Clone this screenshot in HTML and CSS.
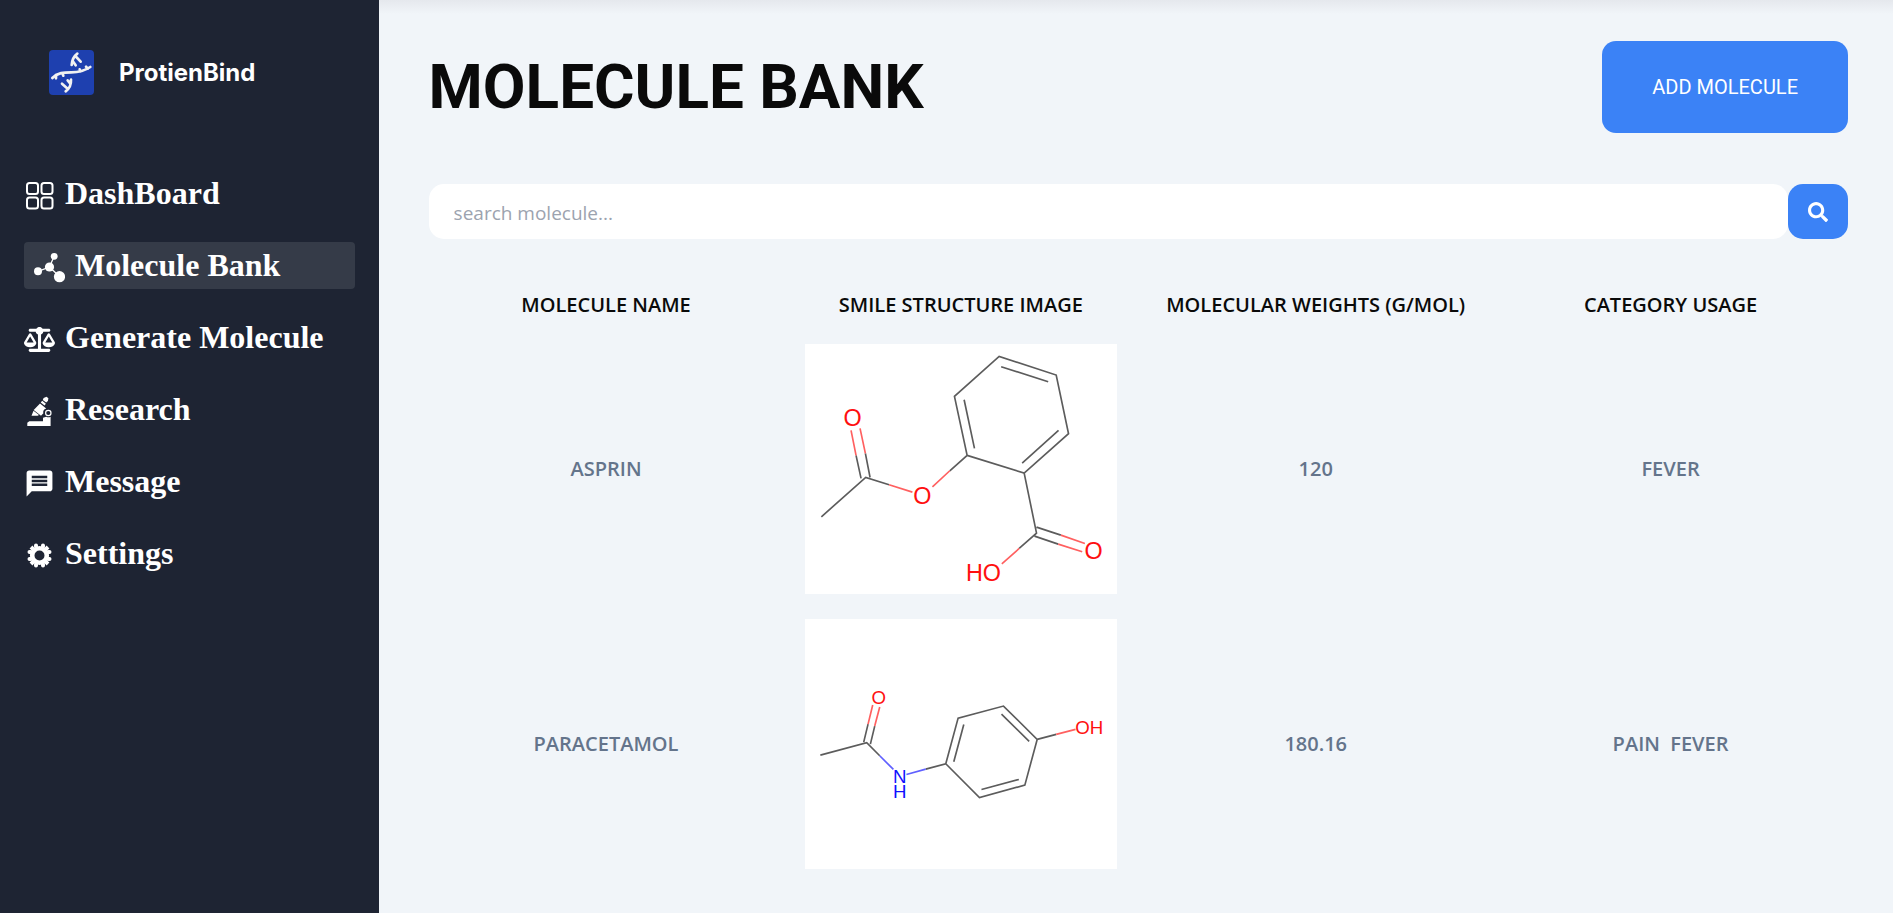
FILE: index.html
```html
<!DOCTYPE html>
<html lang="en">
<head>
<meta charset="utf-8">
<title>ProtienBind - Molecule Bank</title>
<link rel="stylesheet" href="styles.css">
</head>
<body>
<div class="layout">
  <aside class="sidebar">
    <a class="brand" href="#">
      <svg class="brand-logo" viewBox="147 150 135 135" aria-hidden="true">
        <rect x="147" y="150" width="135" height="135" rx="12" fill="#1e40af"/>
        <g fill="none" stroke="#f1f1f1" stroke-width="8" stroke-linecap="round">
          <path d="M157 234C172 218 192 217 214 217S252 214 271 201"/>
          <path d="M168 225v10M187 220l3 7M239 208l2 5M258 200l5 6"/>
          <path d="M232 161C220 170 216 181 215 195M226 168l16 17M218 183l9 13"/>
          <path d="M213 239C214 255 208 266 197 274M186 251l17 15M203 241l8 10"/>
        </g>
      </svg>
      <span class="brand-name">ProtienBind</span>
    </a>
    <nav class="nav">
      <a class="nav-item" href="#">
        <svg class="nav-icon" viewBox="0 0 31 31" fill="none" stroke="#fff" stroke-width="2" aria-hidden="true"><rect x="3" y="3" width="11" height="11" rx="2.5"/><rect x="17.5" y="3" width="11" height="11" rx="2.5"/><rect x="3" y="17.500" width="11" height="11" rx="2.500"/><rect x="17.500" y="17.500" width="11" height="11" rx="2.500"/></svg>
        <span>DashBoard</span>
      </a>
      <a class="nav-item nav-item-active" href="#" aria-current="page">
        <svg class="nav-icon" viewBox="0 0 31 31" fill="#fff" aria-hidden="true"><path d="M4 19.300 15.500 15 20 4.500M15.500 15l10 9.500" fill="none" stroke="#fff" stroke-width="1.300"/><circle cx="4" cy="19.300" r="4"/><circle cx="15.500" cy="15" r="4.600"/><circle cx="20.200" cy="4.300" r="3.400"/><circle cx="25.500" cy="24.700" r="5.600"/></svg>
        <span>Molecule Bank</span>
      </a>
      <a class="nav-item" href="#">
        <svg class="nav-icon" viewBox="0 0 640 512" fill="#fff" aria-hidden="true"><path d="M384 32H512c17.700 0 32 14.300 32 32s-14.300 32-32 32H398.400c-5.200 25.800-22.900 47.100-46.400 57.300V448H512c17.700 0 32 14.300 32 32s-14.300 32-32 32H128c-17.700 0-32-14.300-32-32s14.300-32 32-32H288V153.300c-23.500-10.300-41.200-31.600-46.400-57.300H128c-17.700 0-32-14.300-32-32s14.300-32 32-32H256c14.600-19.400 37.800-32 64-32s49.400 12.600 64 32zm55.600 288H584.400L512 195.800 439.600 320zM512 416c-62.900 0-115.200-34-126-78.900c-2.600-11 1-22.300 6.700-32.100l95.200-163.200c5-8.600 14.200-13.800 24.100-13.800s19.100 5.300 24.100 13.800l95.200 163.200c5.700 9.800 9.300 21.100 6.700 32.100C627.200 382 574.900 416 512 416zM126.800 195.800L54.400 320H199.300L126.800 195.800zM.9 337.100c-2.600-11 1-22.300 6.700-32.100l95.200-163.200c5-8.600 14.200-13.800 24.100-13.800s19.100 5.300 24.100 13.800l95.200 163.200c5.700 9.800 9.300 21.100 6.700 32.100C242 382 189.700 416 126.800 416S11.700 382 .9 337.100z"/></svg>
        <span>Generate Molecule</span>
      </a>
      <a class="nav-item" href="#">
        <svg class="nav-icon" viewBox="0 0 31 31" fill="#fff" aria-hidden="true"><path d="M22.500.8l1.900 1.400-.5 2.800-1.700 1.600-3.400-2.700.8-1.900zM18.200 4.800l3.700 2.900-1.300 1.800-3.900-3zM16 7.500l6.200 5c-2.600.8-3.500 3-2.800 4.800l-2.400 2.500-7.300-5.800zM9.500 14.800l5.500 4.200-1.500.8H7.500z"/><circle cx="24.300" cy="17" r="2.700" fill="none" stroke="#fff" stroke-width="1.200"/><path d="M22.300 20.700c1.700.9 3.200.6 4.300 0V30H3.300v-3.300l2-1.500H19v-3.500z"/></svg>
        <span>Research</span>
      </a>
      <a class="nav-item" href="#">
        <svg class="nav-icon" viewBox="0 0 24 24" fill="#fff" aria-hidden="true"><path d="M20 2H4c-1.100 0-1.990.9-1.990 2L2 22l4-4h14c1.100 0 2-.9 2-2V4c0-1.100-.9-2-2-2zM6 9h12v2H6V9zm12 5H6v-2h12v2zm0-6H6V6h12v2z"/></svg>
        <span>Message</span>
      </a>
      <a class="nav-item" href="#">
        <svg class="nav-icon" viewBox="-15.500 -15.500 31 31" fill="none" stroke="#fff" aria-hidden="true"><circle r="7.300" stroke-width="4.600"/><g stroke-width="4" stroke-linecap="round"><path d="M-3.500-10 -3.500-9M3.500-10 3.500-9M-3.500 10V9M3.500 10V9M-10-3.500H-9M-10 3.500H-9M10-3.500H9M10 3.500H9"/></g><path d="M5.700-8.500 8.500-5.700M-5.700-8.500-8.500-5.700M5.700 8.500 8.500 5.700M-5.700 8.500-8.500 5.700" stroke-width="4"/></svg>
        <span>Settings</span>
      </a>
    </nav>
  </aside>

  <main class="main">
    <header class="page-head">
      <h1 class="page-title">MOLECULE BANK</h1>
      <button class="add-button" type="button">ADD MOLECULE</button>
    </header>

    <form class="search" role="search">
      <input class="search-input" type="text" placeholder="search molecule..." aria-label="Search molecule">
      <button class="search-button" type="button" aria-label="Search">
        <svg class="search-icon" viewBox="0 0 512 512" fill="#fff" aria-hidden="true"><path d="M505 442.700L405.300 343c-4.500-4.500-10.600-7-17-7H372c27.600-35.300 44-79.700 44-128C416 93.100 322.900 0 208 0S0 93.100 0 208s93.100 208 208 208c48.300 0 92.700-16.400 128-44v16.300c0 6.400 2.500 12.500 7 17l99.700 99.700c9.400 9.400 24.600 9.400 33.900 0l28.300-28.300c9.400-9.400 9.400-24.600.1-34zM208 336c-70.700 0-128-57.200-128-128 0-70.700 57.200-128 128-128 70.700 0 128 57.200 128 128 0 70.700-57.200 128-128 128z"/></svg>
      </button>
    </form>

    <table class="molecules">
      <thead>
        <tr>
          <th scope="col">MOLECULE NAME</th>
          <th scope="col">SMILE STRUCTURE IMAGE</th>
          <th scope="col">MOLECULAR WEIGHTS (G/MOL)</th>
          <th scope="col">CATEGORY USAGE</th>
        </tr>
      </thead>
      <tbody>
        <tr>
          <td>ASPRIN</td>
          <td>
            <svg class="structure" viewBox="15 27 936 750" role="img" aria-label="Asprin structure">
              <g class="bond">
                <path d="M64 545 197 427 267 449M183 430 168 361M210 427 196 355"/>
                <path d="M449 407 501 361 463 184 597 64 768 120 805 296 672 414 501 361M523 340 492 194M603 95 744 140M775 286 666 384"/>
                <path d="M672 414 709 594 657 640M709 576 782 600M703 603 774 627"/>
              </g>
              <g class="bond bond-oxygen"><path d="M168 361 153 286M196 355 180 280M267 449 337 471M397 455 449 407M657 640 605 686M782 600 854 625M774 627 846 650"/></g>
              <g class="atom atom-oxygen"><text x="158" y="274">O</text><text x="367" y="506">O</text><text x="880" y="673">O</text><text x="550" y="738">HO</text></g>
            </svg>
          </td>
          <td>120</td>
          <td>FEVER</td>
        </tr>
        <tr>
          <td>PARACETAMOL</td>
          <td>
            <svg class="structure" viewBox="15 27 936 750" role="img" aria-label="Paracetamol structure">
              <g class="bond">
                <path d="M61 435 200 398 239 437M191 396 204 342M211 402 224 348"/>
                <path d="M377 477 437 461 474 324 610 288 711 388 674 525 538 562 437 461M461 455 491 343M604 312 687 394M656 508 544 538M711 388 768 373"/>
              </g>
              <g class="bond bond-oxygen"><path d="M204 342 218 285M224 348 239 291M768 373 826 358"/></g>
              <g class="bond bond-nitrogen"><path d="M239 437 280 478M319 493 377 477"/></g>
              <g class="atom atom-small atom-oxygen"><text x="236" y="281">O</text><text x="867" y="373">OH</text></g>
              <text class="atom atom-small atom-nitrogen"><tspan x="299" y="518">N</tspan><tspan x="299" y="563">H</tspan></text>
            </svg>
          </td>
          <td>180.16</td>
          <td class="usage">PAIN  FEVER</td>
        </tr>
      </tbody>
    </table>
  </main>
</div>
</body>
</html>
```
FILE: styles.css
```css
* {
  box-sizing: border-box;
}

body {
  margin: 0;
  font-family: "Open Sans", "Noto Sans", sans-serif;
  background: #f1f5f9;
  color: #0a0a0a;
}

.layout {
  display: flex;
  min-height: 100vh;
}

.sidebar {
  flex: 0 0 20%;
  padding: 50px 24px;
  background: #1e2433;
  color: #fff;
}

.brand {
  display: flex;
  align-items: center;
  gap: 25px;
  padding-left: 25px;
  color: inherit;
  text-decoration: none;
}

.brand-logo {
  width: 45px;
  height: 45px;
}

.brand-name {
  font: 700 24px/32px Inter, sans-serif;
}

.nav {
  display: flex;
  flex-direction: column;
  gap: 25px;
  margin-top: 75px;
}

.nav-item {
  display: flex;
  align-items: center;
  gap: 10px;
  height: 47px;
  border-radius: 4px;
  color: inherit;
  font: 700 32px/47px "Liberation Serif", serif;
  text-decoration: none;
  white-space: nowrap;
}

.nav-item-active {
  padding: 0 10px;
  background: #353b48;
}

.nav-icon {
  flex: none;
  width: 31px;
  height: 31px;
  margin-top: 3px;
}

.main {
  flex: 1;
  min-width: 0;
  padding: 41px 45px 20px 50px;
  background: linear-gradient(#e5e8ed, #f1f5f9 14px);
}

.page-head {
  display: flex;
  align-items: center;
  justify-content: space-between;
}

.page-title {
  margin: 0;
  font: 700 62px/72px Roboto, sans-serif;
}

.add-button {
  padding: 32px 50px;
  border: 0;
  border-radius: 14px;
  background: #3b82f6;
  color: #fff;
  font: 400 20px/28px Roboto, sans-serif;
}

.search {
  display: flex;
  height: 55px;
  margin-top: 51px;
}

.search-input {
  flex: 1;
  min-width: 0;
  padding: 2px 25px 0;
  border: 0;
  border-radius: 15px;
  background: #fff;
  font: 400 19px/28px "Open Sans", sans-serif;
}

.search-input::placeholder {
  color: #9ca3af;
}

.search-button {
  display: flex;
  align-items: center;
  justify-content: center;
  width: 60px;
  padding: 0;
  border: 0;
  border-radius: 15px;
  background: #3b82f6;
}

.search-icon {
  width: 20px;
  height: 20px;
}

.molecules {
  width: 100%;
  margin-top: 38px;
  border-collapse: collapse;
  table-layout: fixed;
  text-align: center;
  font-size: 20px;
  line-height: 28px;
  font-weight: 600;
}

.molecules th {
  padding: 14px 0 12px;
  font-weight: 600;
  white-space: nowrap;
}

.molecules td {
  padding: 13px 0 12px;
  color: #64748b;
}

.usage {
  white-space: pre;
}

.structure {
  display: block;
  width: 88%;
  margin: 0 auto;
  background: #fff;
}

.bond {
  fill: none;
  stroke: #5c5c5c;
  stroke-width: 5;
}

.bond-oxygen {
  stroke: #ff6060;
}

.bond-nitrogen {
  stroke: #6060ff;
}

.atom {
  font: 400 70px "Liberation Sans", sans-serif;
  text-anchor: middle;
}

.atom-small {
  font-size: 56px;
}

.atom-oxygen {
  fill: #ff1010;
}

.atom-nitrogen {
  fill: #1010ff;
}
```
